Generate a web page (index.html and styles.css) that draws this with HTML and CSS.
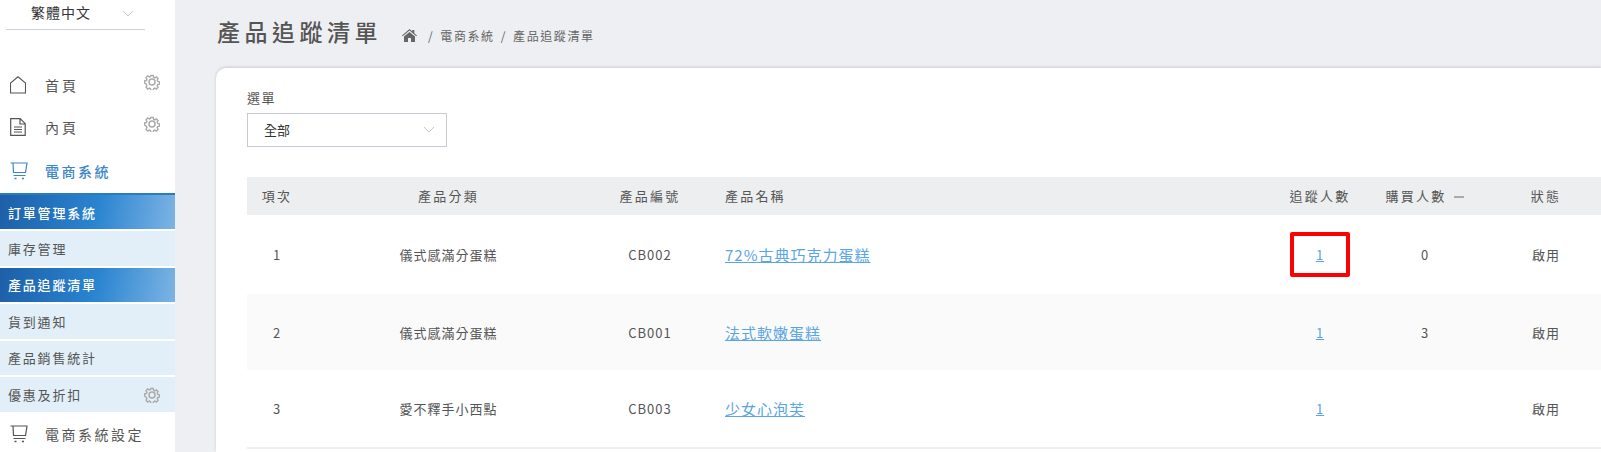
FILE: index.html
```html
<!DOCTYPE html>
<html lang="zh-Hant">
<head>
    <meta charset="UTF-8">
    <title>產品追蹤清單</title>
    <link rel="stylesheet" href="styles.css">
</head>
<body>
    <svg class="defs" width="0" height="0">
        <symbol id="gear" viewBox="0 0 16 16">
            <path d="M6.700 1h2.600l.4 1.900 1.300.6 1.700-1 1.800 1.900-1 1.600.6 1.400 1.900.4v2.400l-1.900.4-.6 1.400 1 1.600-1.800 1.900-1.700-1-1.300.6-.4 1.900H6.700l-.4-1.900-1.300-.6-1.700 1-1.800-1.900 1-1.600-.6-1.400L0 9.200V6.800l1.900-.4.6-1.400-1-1.600 1.800-1.900 1.700 1 1.300-.6z" fill="none" stroke="#aaa" stroke-width="1.500" transform="translate(.6 .6) scale(.93)"/>
            <circle cx="8" cy="8" r="3" fill="none" stroke="#aaa" stroke-width="1.500"/>
        </symbol>
        <symbol id="cart" viewBox="0 0 18 18">
            <path d="M.5 1h16.500l-1.500 9.500H3.500L3 1M3.500 13.500h12" fill="none" stroke="currentColor" stroke-width="1.200"/>
            <path d="M4.500 16.500h2M12 16.500h2" stroke="currentColor" stroke-width="1.400"/>
        </symbol>
    </svg>

    <aside class="sidebar">
        <div class="lang">
            <span>繁體中文</span>
            <svg class="chevron" width="12" height="7" viewBox="0 0 12 7"><path d="M1 1l5 5 5-5" fill="none" stroke="#c4c6d0"/></svg>
        </div>
        <ul class="menu">
            <li class="menu-item">
                <svg class="menu-icon" width="16" height="18" viewBox="0 0 16 18"><path d="M.5 17V7L8 .8 15.500 7v10z" fill="none" stroke="#555" stroke-width="1.100"/></svg>
                <span>首頁</span>
                <svg class="gear"><use href="#gear"/></svg>
            </li>
            <li class="menu-item">
                <svg class="menu-icon" width="16" height="18" viewBox="0 0 16 18"><path d="M.7 17.300V.7h9.500l5 5v11.600zM10 1v5h5M4 9h8M4 11.500h8M4 14h8" fill="none" stroke="#555" stroke-width="1.200"/></svg>
                <span>內頁</span>
                <svg class="gear"><use href="#gear"/></svg>
            </li>
            <li class="menu-item is-open">
                <svg class="menu-icon cart"><use href="#cart"/></svg>
                <span>電商系統</span>
            </li>
        </ul>
        <ul class="submenu">
            <li class="sub-item is-active is-first">訂單管理系統</li>
            <li class="sub-item">庫存管理</li>
            <li class="sub-item is-active">產品追蹤清單</li>
            <li class="sub-item">貨到通知</li>
            <li class="sub-item">產品銷售統計</li>
            <li class="sub-item">優惠及折扣<svg class="gear"><use href="#gear"/></svg></li>
        </ul>
        <div class="menu-item is-last">
            <svg class="menu-icon cart"><use href="#cart"/></svg>
            <span>電商系統設定</span>
        </div>
    </aside>

    <main class="content">
        <header class="page-head">
            <h1>產品追蹤清單</h1>
            <nav class="crumbs">
                <svg width="15" height="13" viewBox="0 0 15 13"><path d="M7.500 0L0 6.500l.7.8L7.500 1.600l6.800 5.700.7-.8-2.700-2.300V1h-2v1.500zM2 7.500V13h4V9h3v4h4V7.500L7.500 3z" fill="#666"/></svg>
                <span>/</span><span>電商系統</span><span>/</span><span>產品追蹤清單</span>
            </nav>
        </header>

        <section class="card">
            <label class="field-label">選單</label>
            <div class="select">
                <span>全部</span>
                <svg width="12" height="7" viewBox="0 0 12 7"><path d="M1 1l5 5 5-5" fill="none" stroke="#c4c6d0"/></svg>
            </div>

            <table class="list">
                <colgroup>
                    <col class="col-no"><col class="col-cat"><col class="col-code"><col class="col-name"><col class="col-track"><col class="col-buy"><col class="col-state">
                </colgroup>
                <thead>
                    <tr>
                        <th>項次</th>
                        <th>產品分類</th>
                        <th>產品編號</th>
                        <th class="left">產品名稱</th>
                        <th>追蹤人數</th>
                        <th>購買人數<i class="sort"></i></th>
                        <th>狀態</th>
                    </tr>
                </thead>
                <tbody>
                    <tr class="row-a">
                        <td>1</td>
                        <td>儀式感滿分蛋糕</td>
                        <td class="code">CB002</td>
                        <td class="left"><a class="name" href="#">72%古典巧克力蛋糕</a></td>
                        <td><span class="mark"><a href="#">1</a></span></td>
                        <td class="code">0</td>
                        <td>啟用</td>
                    </tr>
                    <tr class="row-b">
                        <td>2</td>
                        <td>儀式感滿分蛋糕</td>
                        <td class="code">CB001</td>
                        <td class="left"><a class="name" href="#">法式軟嫩蛋糕</a></td>
                        <td><a href="#">1</a></td>
                        <td class="code">3</td>
                        <td>啟用</td>
                    </tr>
                    <tr class="row-c">
                        <td>3</td>
                        <td>愛不釋手小西點</td>
                        <td class="code">CB003</td>
                        <td class="left"><a class="name" href="#">少女心泡芙</a></td>
                        <td><a href="#">1</a></td>
                        <td class="code"></td>
                        <td>啟用</td>
                    </tr>
                </tbody>
            </table>
        </section>
    </main>
</body>
</html>
```

FILE: styles.css
```css
* { box-sizing: border-box; }
html, body { height: 100%; }
body {
    margin: 0;
    display: flex;
    overflow: hidden;
    height: 452px;
    font-family: "Noto Sans CJK TC", "Noto Sans", sans-serif;
    color: #555;
    background-color: #eeeff3;
}
.defs { position: absolute; }
ul { list-style: none; margin: 0; padding: 0; }

.sidebar {
    width: 175px;
    flex: none;
    background-color: #fff;
}
.lang {
    display: flex;
    justify-content: space-between;
    align-items: center;
    margin-left: 6px;
    width: 139px;
    height: 30px;
    padding: 0 11px 6px 25px;
    border-bottom: 1px solid #cfd0d8;
    font-size: 14px;
    letter-spacing: 1px;
    color: #333;
}
.chevron { margin-top: 4px; }
.menu { padding-top: 34px; }
.menu-item {
    display: flex;
    align-items: center;
    position: relative;
    height: 42px;
    padding-left: 10px;
    font-size: 14px;
    letter-spacing: 3px;
    color: #555;
}
.menu-icon { flex: none; margin-right: 19px; }
.menu-icon.cart { width: 18px; height: 18px; margin-right: 17px; }
.menu-item .gear { position: absolute; top: 10px; left: 144px; }
.menu-item.is-open { color: #3b87c9; height: 45px; font-weight: 500; letter-spacing: 2.500px; }
.menu-item.is-last { height: 40px; letter-spacing: 2.500px; }
.gear { width: 16px; height: 16px; }

.sub-item {
    display: flex;
    align-items: center;
    position: relative;
    height: 34.500px;
    margin-bottom: 2px;
    padding-left: 8px;
    font-size: 13px;
    letter-spacing: 1.800px;
    color: #555;
    background-color: #e2eff8;
}
.sub-item .gear { position: absolute; left: 144px; top: 10px; }
.sub-item.is-active {
    color: #fff;
    font-weight: 500;
    background: linear-gradient(100deg, #1d5fa8 0%, #2a84d0 55%, #7db4e4 100%);
}
.sub-item.is-first { border-top: 2px solid #2a7cc0; height: 36px; }

.content {
    flex: 1;
    min-width: 0;
    padding-left: 41px;
}
.page-head {
    display: flex;
    align-items: center;
    height: 68px;
    padding: 0 0 6px 1px;
}
.page-head h1 {
    margin: 0;
    font-size: 23px;
    font-weight: 500;
    letter-spacing: 4.500px;
    color: #555;
    line-height: 1;
}
.crumbs {
    display: flex;
    align-items: center;
    gap: 6px;
    margin: 8px 0 0 20px;
    font-size: 12px;
    letter-spacing: 1.600px;
    color: #666;
}
.crumbs svg { margin-right: 5px; }

.card {
    padding: 21px 0 0 31px;
    height: 384px;
    background-color: #fff;
    border-radius: 10px 0 0 0;
    box-shadow: 0 -1px 3px rgba(0,0,0,0.15);
}
.field-label {
    display: block;
    font-size: 13px;
    line-height: 18px;
    letter-spacing: 1.500px;
    color: #555;
}
.select {
    display: flex;
    justify-content: space-between;
    align-items: center;
    width: 200px;
    height: 34px;
    margin-top: 6px;
    padding: 0 11px 2px 16px;
    border: 1px solid #c9cad3;
    font-size: 13px;
    color: #333;
}

.list {
    table-layout: fixed;
    width: 1366px;
    margin-top: 30px;
    border-collapse: collapse;
    font-size: 13px;
    letter-spacing: 1px;
    color: #555;
}
.col-no { width: 60px; }
.col-cat { width: 283px; }
.col-code { width: 120px; }
.col-name { width: 559px; }
.col-track { width: 102px; }
.col-buy { width: 108px; }
.col-state { width: 134px; }
.list th, .list td { padding: 0; text-align: center; }
.list th { height: 38px; font-weight: 400; letter-spacing: 2.200px; padding-bottom: 2px; background-color: #eceef0; }
.list .left { text-align: left; padding-left: 15px; }
.row-a td { height: 79px; }
.row-b td { height: 76px; background-color: #fafafa; }
.row-c td { height: 78px; border-bottom: 2px solid #eeeeee; }
.list a { color: #5aa5e6; }
.list .name { font-size: 15px; letter-spacing: 1px; }
.sort {
    display: inline-block;
    width: 10px;
    height: 2px;
    margin-left: 8px;
    vertical-align: middle;
    background-color: #aaa;
}
.mark {
    display: inline-flex;
    justify-content: center;
    align-items: center;
    width: 60px;
    height: 45px;
    border: 4px solid #f00;
    border-radius: 2px;
    vertical-align: middle;
}
```
